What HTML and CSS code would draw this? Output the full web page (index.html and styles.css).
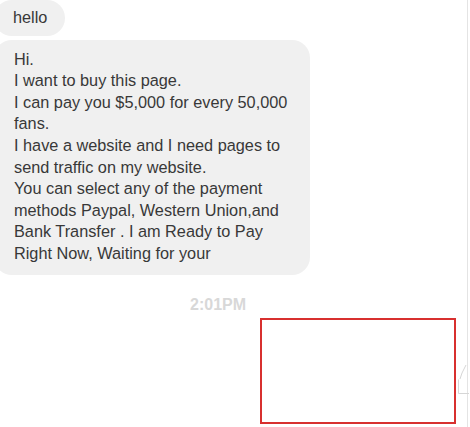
FILE: index.html
```html
<!DOCTYPE html>
<html>
<head>
<meta charset="utf-8">
<link rel="stylesheet" href="styles.css">
</head>
<body>
<div class="pane">
  <div class="thread">
    <div class="bubble bubble-short">hello</div>
    <div class="bubble bubble-long">Hi.<br>I want to buy this page.<br>I can pay you $5,000 for every 50,000 fans.<br>I have a website and I need pages to send traffic on my website.<br>You can select any of the payment methods Paypal, Western Union,and Bank Transfer . I am Ready to Pay Right Now, Waiting for your</div>
    <div class="time">2:01PM</div>
    <div class="highlight"></div>
  </div>
  <svg class="like" width="12" height="32" viewBox="0 0 12 32" aria-hidden="true">
    <path d="M9 0 L5 8 L3 14" fill="none" stroke="#d6d6d6" stroke-width="1"/>
    <path d="M1.5 14.5 V28.5 H12" fill="none" stroke="#d6d6d6" stroke-width="1"/>
  </svg>
</div>
</body>
</html>
```
FILE: styles.css
```css
html, body {
  margin: 0;
  padding: 0;
  background: #ffffff;
}
body {
  width: 470px;
  height: 427px;
  overflow: hidden;
  font-family: "Liberation Sans", Arial, sans-serif;
}
.pane {
  position: relative;
  width: 467px;
  height: 427px;
  border-right: 1px solid #e4e4e4;
}
.thread {
  display: flex;
  flex-direction: column;
  align-items: flex-start;
}
.bubble {
  background: #f0f0f0;
  color: #383838;
  font-size: 16.3px;
  line-height: 21.6px;
  border-radius: 18px;
  margin-left: -6px;
}
.bubble-short {
  padding: 7px 18px 7px 19px;
}
.bubble-long {
  margin-top: 4px;
  width: 280px;
  padding: 9px 16px 10px 20px;
}
.time {
  align-self: stretch;
  margin-top: 21px;
  padding-left: 190px;
  font-size: 16px;
  font-weight: bold;
  color: #d8d8d8;
  line-height: 17px;
}
.highlight {
  margin-top: 5px;
  margin-left: 260px;
  width: 192px;
  height: 102px;
  border: 2px solid #d8302f;
}
.like {
  position: absolute;
  left: 457px;
  top: 365px;
}
```
